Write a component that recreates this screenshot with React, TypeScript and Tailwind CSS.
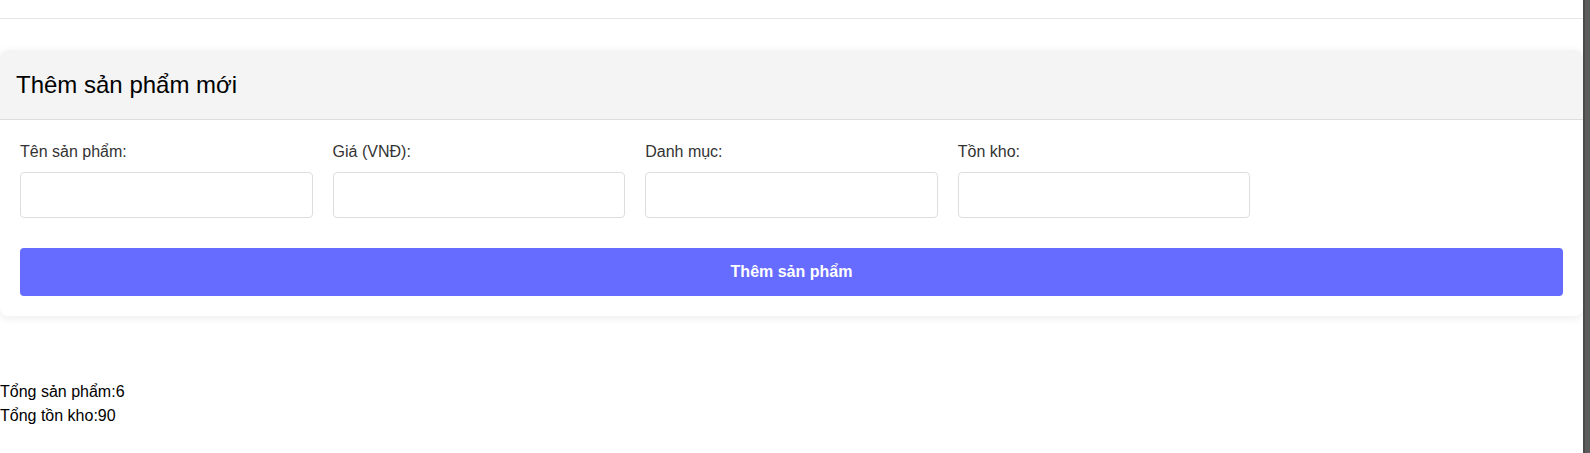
import React, { useState } from 'react';

const fields = [
  { key: 'name', label: 'Tên sản phẩm:' },
  { key: 'price', label: 'Giá (VNĐ):' },
  { key: 'category', label: 'Danh mục:' },
  { key: 'stock', label: 'Tồn kho:' },
];

function App() {
  const [form, setForm] = useState<Record<string, string>>({});

  return (
    <div className="flex min-h-[453px] bg-white font-['Liberation_Sans',Arial,sans-serif] text-black">
      <div className="flex-1">
        {/* top bar */}
        <div className="h-[19px] border-b border-[#e6e6e6]" />

        {/* Add product card */}
        <div className="mt-[31px] rounded-lg bg-white shadow-[0_2px_10px_rgba(0,0,0,0.08)] overflow-hidden">
          <div className="bg-[#f4f4f4] px-4 pt-[17px] pb-4 border-b border-[#dddddd]">
            <h2 className="text-2xl leading-9 font-normal">Thêm sản phẩm mới</h2>
          </div>
          <div className="p-5">
            <div className="grid grid-cols-5 gap-5">
              {fields.map((f) => (
                <div key={f.key}>
                  <label className="block mb-2 text-base leading-6 text-[#333]">{f.label}</label>
                  <input
                    value={form[f.key] || ''}
                    onChange={(e) => setForm({ ...form, [f.key]: e.target.value })}
                    className="block w-full h-[46px] px-3 border border-[#dddddd] rounded bg-white outline-none"
                  />
                </div>
              ))}
            </div>
            <button className="mt-[30px] w-full h-12 rounded bg-[#666cff] text-white font-bold text-base">
              Thêm sản phẩm
            </button>
          </div>
        </div>

        {/* Totals */}
        <div className="mt-[64px] text-base leading-6">
          <p>Tổng sản phẩm:6</p>
          <p>Tổng tồn kho:90</p>
        </div>
      </div>
      <div className="w-[7px] bg-[#5c5c5c] border-l-2 border-[#4a4a4a]" />
    </div>
  );
}

export default App;
